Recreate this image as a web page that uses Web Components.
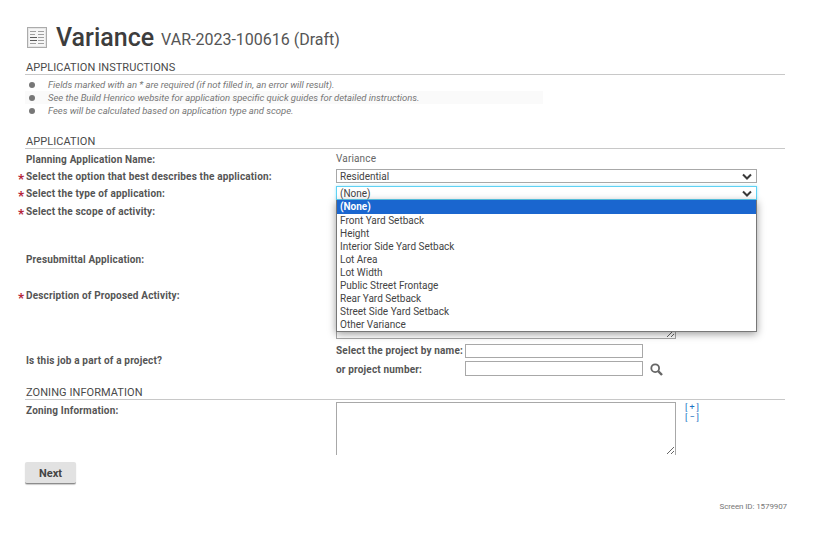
<!DOCTYPE html>
<html lang="en">
<head>
<meta charset="utf-8">
<title>Variance</title>
<style>
    html, body { margin: 0; background: #fff; }
    body { font-family: Roboto, "Liberation Sans", sans-serif; color: #444; }
</style>
</head>
<body>
<app-page>
    <page-title name="Variance" record="VAR-2023-100616 (Draft)"></page-title>

    <section-head>APPLICATION INSTRUCTIONS</section-head>
    <note-list>
        <note-item>Fields marked with an * are required (if not filled in, an error will result).</note-item>
        <note-item shaded>See the Build Henrico website for application specific quick guides for detailed instructions.</note-item>
        <note-item>Fees will be calculated based on application type and scope.</note-item>
    </note-list>

    <section-head style="--top: 17px">APPLICATION</section-head>
    <form-row label="Planning Application Name:" height="19" style="--label-top: 4px">
        <span style="display:block;padding-top:2px;color:#666;font-size:10px;letter-spacing:.15px;line-height:16px">Variance</span>
    </form-row>
    <form-row label="Select the option that best describes the application:" required height="17">
        <select-box value="Residential"></select-box>
    </form-row>
    <form-row label="Select the type of application:" required height="17">
        <select-box value="(None)" open></select-box>
    </form-row>
    <form-row label="Select the scope of activity:" required height="48" style="--label-top: 3px"></form-row>
    <form-row label="Presubmittal Application:" height="36" style="--label-top: 3px"></form-row>
    <form-row label="Description of Proposed Activity:" required height="55" style="--label-top: 3px">
        <memo-box height="53"></memo-box>
    </form-row>
    <form-row label="Is this job a part of a project?" height="44" style="--label-top: 13px">
        <project-lookup></project-lookup>
    </form-row>

    <section-head>ZONING INFORMATION</section-head>
    <form-row label="Zoning Information:" height="55" style="--label-top: 4px">
        <div style="display:flex;gap:9px;padding-top:2px">
            <memo-box height="53" open-bottom></memo-box>
            <expand-links></expand-links>
        </div>
    </form-row>

    <next-button>Next</next-button>
    <screen-id>Screen ID: 1579907</screen-id>
</app-page>

<script>
window.customElements.define("app-page", class extends HTMLElement {
    constructor() {
        super();
        this.attachShadow({ mode: "open" }).innerHTML = `
            <style>
                :host {
                    display: block;
                    width: 760px;
                    height: 557px;
                    padding-left: 25px;
                }
            </style>
            <slot></slot>
        `;
    }
});

window.customElements.define("page-title", class extends HTMLElement {
    connectedCallback() {
        this.attachShadow({ mode: "open" }).innerHTML = `
            <style>
                :host {
                    display: flex;
                    align-items: center;
                    height: 60px;
                    padding-top: 14px;
                    box-sizing: border-box;
                }
                svg { margin: 0 9px 0 2px; flex: none; }
                .name {
                    font-size: 25px;
                    font-weight: 500;
                    color: #3d3d3d;
                    margin-right: 7px;
                }
                .record {
                    font-size: 16px;
                    color: #555;
                    padding-top: 5px;
                }
            </style>
            <svg width="20" height="21" viewBox="0 0 20 21">
                <rect x=".5" y=".5" width="19" height="20" fill="#e6e6e6" stroke="#ababab"/>
                <rect x="2" y="2" width="16" height="17" fill="#f6f6f6"/>
                <path d="M3 4.5h6M11 4.5h6M3 7.5h5M11 7.5h6M11 10.5h6M11 13.5h6M3 16.5h6M11 16.5h6" stroke="#a0a0a0"/>
                <path d="M3 10.5h7M3 13.5h7" stroke="#5a5a5a"/>
            </svg>
            <span class="name">${this.getAttribute("name")}</span>
            <span class="record">${this.getAttribute("record")}</span>
        `;
    }
});

window.customElements.define("section-head", class extends HTMLElement {
    constructor() {
        super();
        this.attachShadow({ mode: "open" }).innerHTML = `
            <style>
                :host {
                    display: block;
                    margin-top: var(--top, 0);
                    height: 15px;
                    padding: 1px 0 0 1px;
                    font-size: 11px;
                    line-height: 13px;
                    letter-spacing: .07px;
                    color: #4a4a4a;
                    border-bottom: 1px solid #c8c8c8;
                    box-sizing: border-box;
                }
            </style>
            <slot></slot>
        `;
    }
});

window.customElements.define("note-list", class extends HTMLElement {
    constructor() {
        super();
        this.attachShadow({ mode: "open" }).innerHTML = `
            <style>
                :host {
                    display: block;
                    padding-top: 3px;
                    height: 42px;
                    box-sizing: border-box;
                    font-size: 9.5px;
                    font-style: italic;
                    color: #777;
                }
            </style>
            <slot></slot>
        `;
    }
});

window.customElements.define("note-item", class extends HTMLElement {
    constructor() {
        super();
        this.attachShadow({ mode: "open" }).innerHTML = `
            <style>
                :host {
                    display: flex;
                    align-items: center;
                    height: 13px;
                    letter-spacing: -.03px;
                }
                :host([shaded]) { background: #fafafa; width: 518px; }
                i {
                    width: 6px;
                    height: 6px;
                    border-radius: 50%;
                    background: #777;
                    margin: 1px 13px 0 4px;
                    flex: none;
                }
            </style>
            <i></i><slot></slot>
        `;
    }
});

window.customElements.define("form-row", class extends HTMLElement {
    connectedCallback() {
        const star = this.hasAttribute("required") ? `<b class="star">*</b>` : "";
        this.attachShadow({ mode: "open" }).innerHTML = `
            <style>
                :host {
                    display: grid;
                    grid-template-columns: 311px 421px;
                    height: ${this.getAttribute("height")}px;
                }
                .label {
                    position: relative;
                    padding: var(--label-top, 2px) 0 0 1px;
                    font-size: 10px;
                    font-weight: 700;
                    letter-spacing: .17px;
                    line-height: 13px;
                    color: #555;
                }
                /* the star hangs out to the left of the label column */
                .star {
                    position: absolute;
                    left: -7px;
                    top: calc(var(--label-top, 2px) + 2px);
                    color: #b5263a;
                    font-size: 13px;
                }
            </style>
            <div class="label">${star}${this.getAttribute("label")}</div>
            <div class="field"><slot></slot></div>
        `;
    }
});

window.customElements.define("select-box", class extends HTMLElement {
    #options = ["(None)", "Front Yard Setback", "Height", "Interior Side Yard Setback", "Lot Area",
        "Lot Width", "Public Street Frontage", "Rear Yard Setback", "Street Side Yard Setback", "Other Variance"];

    connectedCallback() {
        const open = this.hasAttribute("open");
        const list = open ? `<div class="list">${this.#options.map((o, i) =>
            `<div class="option${i === 0 ? " current" : ""}">${o}</div>`).join("")}</div>` : "";
        this.attachShadow({ mode: "open" }).innerHTML = `
            <style>
                :host {
                    display: block;
                    position: relative;
                    width: 421px;
                    margin-top: 1px;
                    font-size: 10px;
                    color: #444;
                }
                :host([open]) { z-index: 10; }
                .box {
                    height: 14px;
                    box-sizing: border-box;
                    border: 1px solid #a8a8a8;
                    padding: 1px 3px 0;
                    line-height: 11px;
                    display: flex;
                    justify-content: space-between;
                    align-items: center;
                }
                :host([open]) .box {
                    border-color: #5fd2f4;
                    box-shadow: 0 0 3px #a5e6fa;
                }
                svg { margin: -1px 1px 0 0; }
                .list {
                    position: absolute;
                    top: 14px;
                    left: 0;
                    right: 0;
                    background: #fff;
                    border: 1px solid #777;
                    border-top: 0;
                    box-shadow: 0 2px 8px rgba(0, 0, 0, .4);
                }
                .option {
                    height: 13px;
                    line-height: 13px;
                    padding: 0 3px;
                }
                .current {
                    height: 14px;
                    line-height: 14px;
                    background: #1a66cf;
                    color: #fff;
                    font-weight: 700;
                }
            </style>
            <div class="box">
                <span>${this.getAttribute("value")}</span>
                <svg width="10" height="7" viewBox="0 0 10 7">
                    <path d="M1 1.5l4 4 4-4" fill="none" stroke="#3a3a3a" stroke-width="2"/>
                </svg>
            </div>
            ${list}
        `;
    }
});

window.customElements.define("memo-box", class extends HTMLElement {
    connectedCallback() {
        const flat = this.hasAttribute("open-bottom") ? "border-bottom: 0;" : "";
        this.attachShadow({ mode: "open" }).innerHTML = `
            <style>
                :host { display: block; width: 340px; }
                textarea {
                    display: block;
                    width: 340px;
                    height: ${this.getAttribute("height")}px;
                    box-sizing: border-box;
                    margin: 0;
                    border: 1px solid #a8a8a8;
                    ${flat}
                    background: #fff;
                    outline: 0;
                }
            </style>
            <textarea></textarea>
        `;
    }
});

window.customElements.define("project-lookup", class extends HTMLElement {
    constructor() {
        super();
        this.attachShadow({ mode: "open" }).innerHTML = `
            <style>
                :host {
                    display: grid;
                    grid-template-columns: 129px 178px 20px;
                    grid-auto-rows: 17px;
                    padding-top: 3px;
                    font-size: 10px;
                    font-weight: 700;
                    letter-spacing: .17px;
                    line-height: 14px;
                    white-space: nowrap;
                    color: #555;
                }
                .second { padding-top: 2px; }
                input {
                    width: 178px;
                    height: 14px;
                    box-sizing: border-box;
                    margin: 0;
                    border: 1px solid #a8a8a8;
                    padding: 0;
                    display: block;
                }
                input.second { height: 15px; padding: 0; }
                svg { margin: 2px 0 0 7px; display: block; }
            </style>
            <span>Select the project by name:</span><input type="text"><span></span>
            <span class="second">or project number:</span><input class="second" type="text">
            <svg width="13" height="13" viewBox="0 0 13 13">
                <circle cx="5.2" cy="5.2" r="3.9" fill="none" stroke="#666" stroke-width="1.8"/>
                <path d="M8.2 8.2l3.8 3.8" stroke="#666" stroke-width="2.4"/>
            </svg>
        `;
    }
});

window.customElements.define("expand-links", class extends HTMLElement {
    constructor() {
        super();
        this.attachShadow({ mode: "open" }).innerHTML = `
            <style>
                :host {
                    display: block;
                    font-size: 9px;
                    line-height: 10px;
                    letter-spacing: 2px;
                    color: #1a72c4;
                }
                div { cursor: pointer; }
            </style>
            <div>[+]</div>
            <div>[−]</div>
        `;
    }
});

window.customElements.define("next-button", class extends HTMLElement {
    constructor() {
        super();
        this.attachShadow({ mode: "open" }).innerHTML = `
            <style>
                :host {
                    display: flex;
                    align-items: center;
                    justify-content: center;
                    width: 51px;
                    height: 22px;
                    margin-top: 7px;
                    padding-top: 1px;
                    box-sizing: border-box;
                    background: #e2e2e2;
                    border-radius: 2px;
                    border-bottom: 1px solid #8c8c8c;
                    box-shadow: 0 1px 1px rgba(0, 0, 0, .2);
                    font-size: 11px;
                    font-weight: 700;
                    color: #444;
                    cursor: pointer;
                }
            </style>
            <slot></slot>
        `;
    }
});

window.customElements.define("screen-id", class extends HTMLElement {
    constructor() {
        super();
        this.attachShadow({ mode: "open" }).innerHTML = `
            <style>
                :host {
                    display: block;
                    margin-top: 18px;
                    margin-right: -2px;
                    text-align: right;
                    font-size: 8px;
                    letter-spacing: -.1px;
                    line-height: 10px;
                    color: #777;
                }
            </style>
            <slot></slot>
        `;
    }
});
</script>
</body>
</html>
